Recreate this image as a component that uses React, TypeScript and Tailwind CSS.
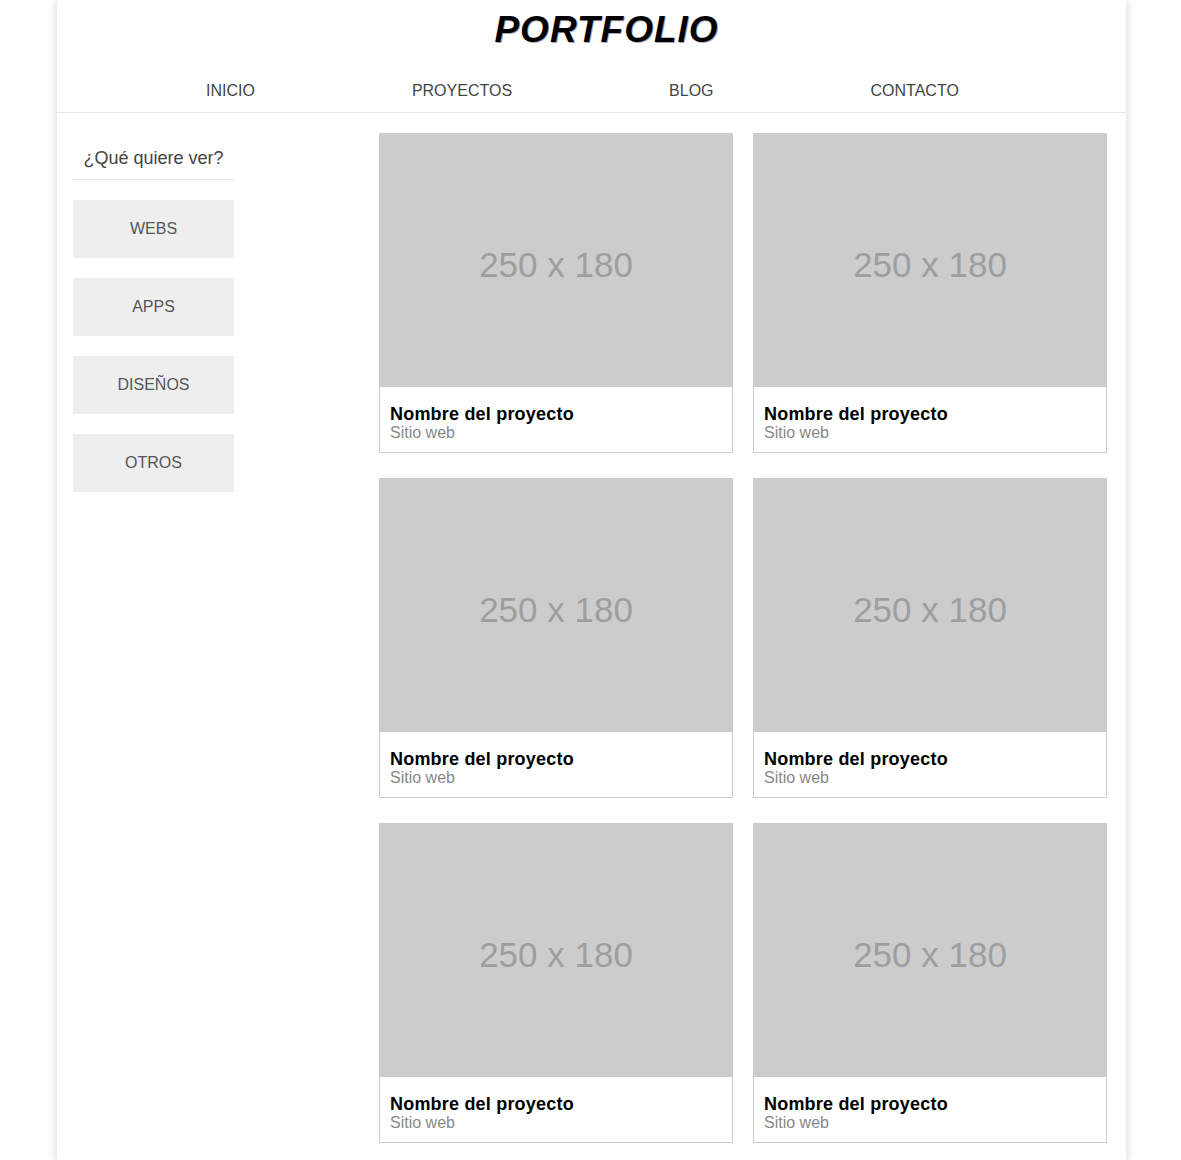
const menu = ['INICIO', 'PROYECTOS', 'BLOG', 'CONTACTO'];
const filtros = ['WEBS', 'APPS', 'DISEÑOS', 'OTROS'];
const proyectos = [1, 2, 3, 4, 5, 6];

const Proyecto = () => {
  return (
    <article className="flex flex-col">
      <div className="h-[254px] bg-[#cccccc] flex items-center justify-center pt-[10px] text-[35px] text-[#9e9e9e]">
        250 x 180
      </div>
      <div className="h-[66px] border border-t-0 border-[#cccccc] px-[10px] pt-[17px]">
        <h3 className="text-[18px] leading-[20px] font-bold tracking-[0.2px] text-black">
          Nombre del proyecto
        </h3>
        <p className="text-[16px] leading-[18px] text-[#888888]">Sitio web</p>
      </div>
    </article>
  );
};

export default function App() {
  return (
    <div className="min-h-screen bg-white font-['Liberation_Sans',Arial,sans-serif]">
      <div className="w-[1069px] mx-auto translate-x-[1px] bg-white shadow-[0_0_10px_rgba(0,0,0,0.18)] pb-[20px]">
        <header className="border-b border-[#e6e6e6]">
          <div className="h-[58px] flex items-center justify-center pl-[30px]">
            <h1 className="text-[37px] leading-none font-bold italic tracking-[1px] text-black [text-shadow:1px_1px_0_rgba(0,0,60,0.35)]">
              PORTFOLIO
            </h1>
          </div>
          <nav className="h-[54px] flex items-center gap-[157px] pl-[149px] pt-[12px] text-[16px] text-[#444444]">
            {menu.map((item) => (
              <a key={item} href="#" className="hover:text-black">
                {item}
              </a>
            ))}
          </nav>
        </header>

        <main className="flex pt-[20px] pl-[16px] pr-[19px]">
          <aside className="w-[161px] flex flex-col">
            <div className="pt-[14px] pb-[10px] border-b border-[#e6e6e6] text-center text-[18px] leading-[22px] text-[#444444]">
              ¿Qué quiere ver?
            </div>
            <div className="flex flex-col gap-[20px] mt-[20px]">
              {filtros.map((f) => (
                <button
                  key={f}
                  className="h-[58px] bg-[#eeeeee] text-[16px] text-[#555555]"
                >
                  {f}
                </button>
              ))}
            </div>
          </aside>

          <section className="ml-auto grid grid-cols-[354px_354px] gap-x-[20px] gap-y-[25px]">
            {proyectos.map((p) => (
              <Proyecto key={p} />
            ))}
          </section>
        </main>
      </div>
    </div>
  );
}
